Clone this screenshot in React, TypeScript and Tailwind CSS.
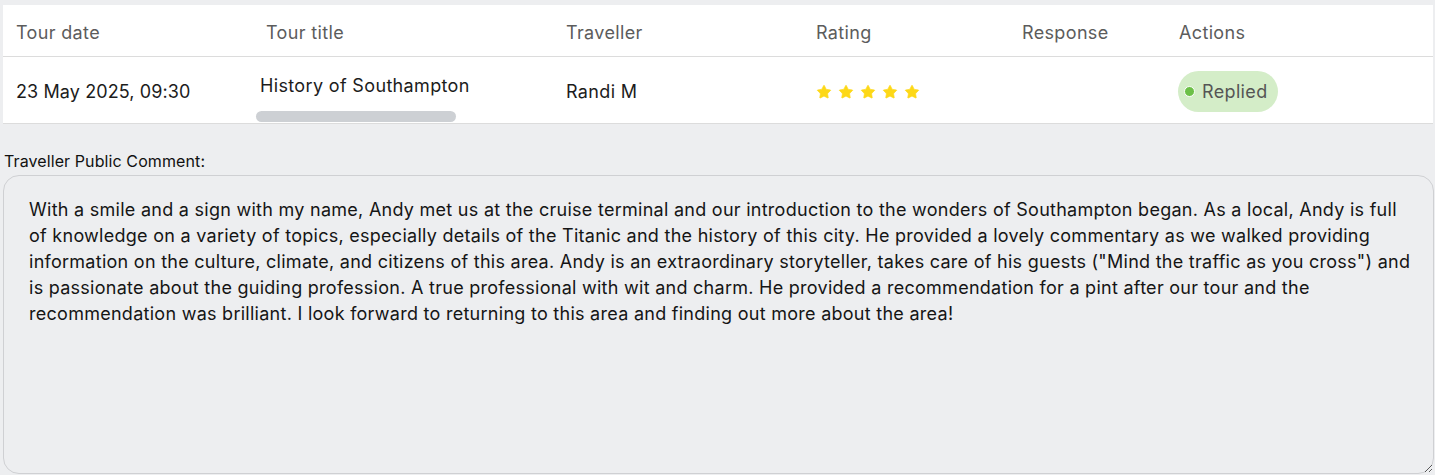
import { Star } from 'lucide-react';

const comment =
  'With a smile and a sign with my name, Andy met us at the cruise terminal and our introduction to the wonders of Southampton began. As a local, Andy is full of knowledge on a variety of topics, especially details of the Titanic and the history of this city. He provided a lovely commentary as we walked providing information on the culture, climate, and citizens of this area. Andy is an extraordinary storyteller, takes care of his guests ("Mind the traffic as you cross") and is passionate about the guiding profession. A true professional with wit and charm. He provided a recommendation for a pint after our tour and the recommendation was brilliant. I look forward to returning to this area and finding out more about the area!';

const cols = 'grid grid-cols-[250px_300px_250px_206px_157px_1fr]';

export default function App() {
  return (
    <div className="w-[1435px] h-[475px] bg-[#edeef0] pt-[5px] font-['Inter',sans-serif] overflow-hidden">
      <div className="ml-[3px] mr-[2px] bg-white">
        <div className={`${cols} h-[52px] pt-[3px] items-center border-b border-[#dcdcdc] text-[18px] tracking-[0.35px] text-[#5c5c5c]`}>
          <div className="pl-[13px]">Tour date</div>
          <div className="pl-[13px]">Tour title</div>
          <div className="pl-[13px]">Traveller</div>
          <div className="pl-[13px]">Rating</div>
          <div className="pl-[13px]">Response</div>
          <div className="pl-[13px]">Actions</div>
        </div>
        <div className={`${cols} h-[67px] pt-[3px] items-center border-b border-[#dcdcdc] text-[18px] tracking-[0.35px] text-[#1c1c1c]`}>
          <div className="pl-[13px] tracking-[0.1px]">23 May 2025, 09:30</div>
          <div className="pl-[3px] self-stretch flex flex-col pt-[13px]">
            <div className="pl-[4px] leading-[26px]">History of Southampton</div>
            <div className="mt-auto mb-[1px] w-[200px] h-[11px] rounded-full bg-[#cdd0d4]" />
          </div>
          <div className="pl-[13px]">Randi M</div>
          <div className="pl-[13px] flex gap-[6px]">
            {[0, 1, 2, 3, 4].map((i) => (
              <Star key={i} className="w-[16px] h-[16px] text-[#fdd817] fill-[#fdd817]" strokeWidth={1} />
            ))}
          </div>
          <div />
          <div className="pl-[12px]">
            <span className="inline-flex items-center h-[41px] px-[6px] pr-[10px] rounded-full bg-[#d4edc8] text-[#555]">
              <span className="w-[11px] h-[11px] rounded-full bg-[#6cc047] border-[1.5px] border-white mr-[7px]" />
              Replied
            </span>
          </div>
        </div>
      </div>
      <div className="pl-[4px] pt-[27px] text-[16px] leading-[20px] tracking-[0.1px] text-[#111]">Traveller Public Comment:</div>
      <textarea
        readOnly
        value={comment}
        className="block mt-[4px] ml-[3px] w-[1431px] h-[299px] rounded-[16px] border border-[#cfd0d3] bg-[#edeef0] pl-[25px] pr-[16px] pt-[21px] text-[18px] leading-[26px] tracking-[0.27px] text-[#151515] font-['Inter',sans-serif] outline-none"
      />
    </div>
  );
}
